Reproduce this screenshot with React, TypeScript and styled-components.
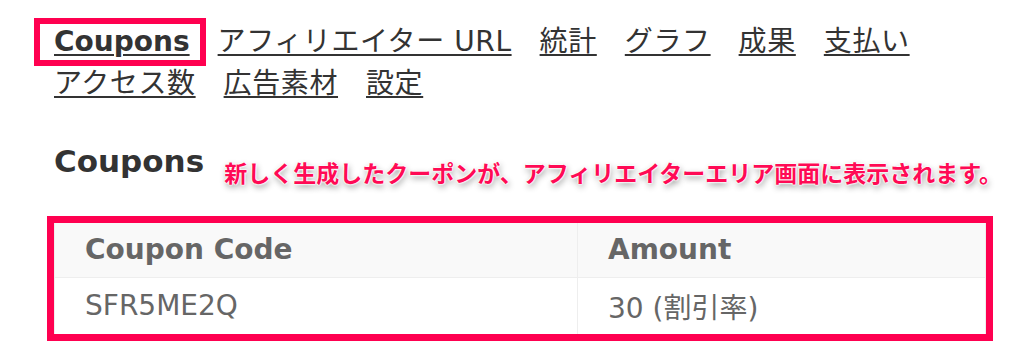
import React from 'react';
import styled, { createGlobalStyle } from 'styled-components';

const GlobalStyle = createGlobalStyle`
  body {
    margin: 0;
    background: #fff;
    font-family: "DejaVu Sans", "Noto Sans CJK JP", sans-serif;
    color: #333;
  }
`;

const Page = styled.div`
  padding: 21px 0 0 54px;
`;

const Nav = styled.nav`
  display: flex;
  flex-wrap: wrap;
  align-items: baseline;
  column-gap: 28px;
  width: 880px;
`;

const NavLink = styled.a<{ $active?: boolean }>`
  position: relative;
  font-size: 28px;
  line-height: 42px;
  letter-spacing: ${p => (p.$active ? 0 : 0.6)}px;
  color: #333;
  font-weight: ${p => (p.$active ? 700 : 400)};
  text-decoration: underline;
  text-decoration-thickness: 2px;
  text-underline-offset: 3px;
  cursor: pointer;

  ${p =>
    p.$active &&
    `
    &::after {
      content: '';
      position: absolute;
      left: -20px;
      right: -16px;
      top: -3px;
      bottom: -3px;
      border: 6px solid #ff0050;
    }
  `}
`;

const TitleRow = styled.div`
  display: flex;
  align-items: flex-start;
  gap: 20px;
  margin-top: 36px;
`;

const Title = styled.h2`
  margin: 0;
  font-size: 31px;
  line-height: 40px;
  font-weight: 700;
  color: #333;
`;

const Note = styled.div`
  margin-top: 16px;
  font-family: "Noto Sans CJK JP", sans-serif;
  font-size: 23px;
  line-height: 30px;
  font-weight: 700;
  color: #ff0a55;
  text-shadow:
    0 0 2px #fff, 0 0 2px #fff, 0 0 2px #fff, 0 0 2px #fff,
    1px 3px 6px rgba(0, 0, 0, 0.45);
  white-space: nowrap;
`;

const Frame = styled.div`
  box-sizing: border-box;
  width: 946px;
  margin: 29px 0 0 -7px;
  border: 7px solid #ff0050;
`;

const Table = styled.table`
  width: 100%;
  border-collapse: collapse;
  table-layout: fixed;
`;

const Th = styled.th<{ $w?: number }>`
  box-sizing: border-box;
  width: ${p => (p.$w ? `${p.$w}px` : 'auto')};
  height: 54px;
  padding: 0 30px;
  text-align: left;
  font-size: 28px;
  font-weight: 700;
  color: #666;
  background: #f9f9f9;
  border: 1px solid #eee;
  border-top: 0;
`;

const Td = styled.td`
  height: 56px;
  padding: 0 30px;
  font-size: 28px;
  color: #666;
  border: 1px solid #eee;
  border-bottom: 0;
`;

const navItems = ['アフィリエイター URL', '統計', 'グラフ', '成果', '支払い', 'アクセス数', '広告素材', '設定'];

export default function App() {
  return (
    <>
      <GlobalStyle />
      <Page>
        <Nav>
          <NavLink $active>Coupons</NavLink>
          {navItems.map(item => (
            <NavLink key={item}>{item}</NavLink>
          ))}
        </Nav>
        <TitleRow>
          <Title>Coupons</Title>
          <Note>新しく生成したクーポンが、アフィリエイターエリア画面に表示されます。</Note>
        </TitleRow>
        <Frame>
          <Table>
            <thead>
              <tr>
                <Th $w={523}>Coupon Code</Th>
                <Th>Amount</Th>
              </tr>
            </thead>
            <tbody>
              <tr>
                <Td>SFR5ME2Q</Td>
                <Td>30 (割引率)</Td>
              </tr>
            </tbody>
          </Table>
        </Frame>
      </Page>
    </>
  );
}
